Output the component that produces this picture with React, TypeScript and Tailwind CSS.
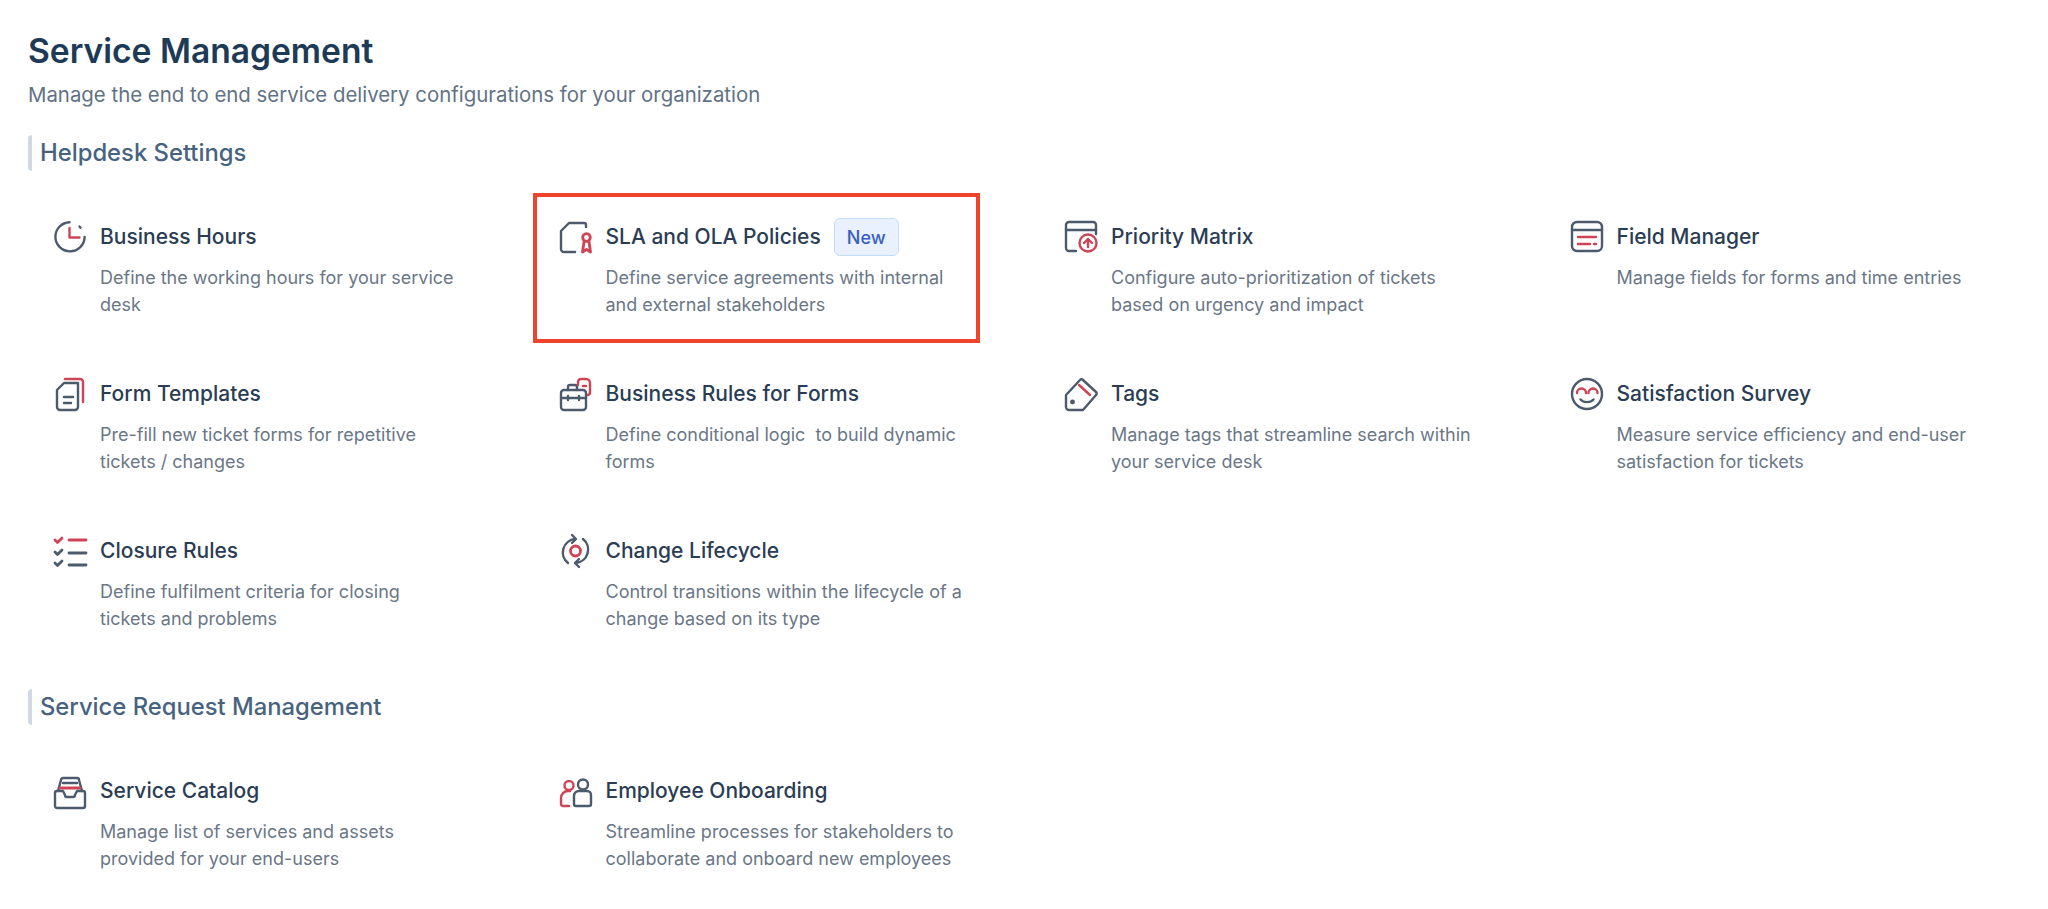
import type { ReactNode } from 'react';

const DARK = '#4b5a6c';
const RED = '#cf4454';

function Icon({ children }: { children: ReactNode }) {
  return (
    <svg
      viewBox="0 0 32 32"
      fill="none"
      strokeWidth={2.4}
      strokeLinecap="round"
      strokeLinejoin="round"
      className="w-8 h-8 shrink-0 overflow-visible"
    >
      {children}
    </svg>
  );
}

const ClockIcon = () => (
  <Icon>
    <path d="M15.5 1.2A14.6 14.6 0 1 0 30.6 16" stroke={DARK} />
    <path d="M25.5 5.5l1 1.2" stroke={DARK} />
    <path d="M15.5 7v9.5h10" stroke={RED} />
  </Icon>
);

const PolicyIcon = () => (
  <Icon>
    <path d="M15 31H4a3 3 0 0 1-3-3V10l8-8h15a2 2 0 0 1 2 2v2" stroke={DARK} />
    <circle cx="26.5" cy="16.500" r="3.800" stroke={RED} strokeWidth={2.800} />
    <path d="M24 21l-1.500 10 4-2.500 4 2.500-1.500-10" stroke={RED} strokeWidth={2.800} />
  </Icon>
);

const MatrixIcon = () => (
  <Icon>
    <path d="M11 30H4a3 3 0 0 1-3-3V4a3 3 0 0 1 3-3h24a3 3 0 0 1 3 3v9" stroke={DARK} />
    <path d="M1 9h30" stroke={DARK} />
    <circle cx="23" cy="22" r="8.500" stroke={RED} />
    <path d="M19 22l4-4 4 4M23 18v8" stroke={RED} />
  </Icon>
);

const FieldIcon = () => (
  <Icon>
    <rect x="1" y="1" width="30" height="29" rx="5" stroke={DARK} />
    <path d="M1 9h30" stroke={DARK} />
    <path d="M7 16h18M7 23h12M23 23h2" stroke={RED} />
  </Icon>
);

const FormIcon = () => (
  <Icon>
    <path d="M11 1h15a3 3 0 0 1 3 3v20" stroke={RED} />
    <path d="M10 5h14v24a3 3 0 0 1-3 3H6a3 3 0 0 1-3-3V12z" stroke={DARK} />
    <path d="M10 19h9M10 25h7" stroke={DARK} />
  </Icon>
);

const BriefcaseIcon = () => (
  <Icon>
    <rect x="1" y="12" width="25" height="20" rx="3" stroke={DARK} />
    <path d="M8 12V9a2 2 0 0 1 2-2h5a2 2 0 0 1 2 2v3" stroke={DARK} />
    <path d="M1 20h25M8 18v4M19 18v4" stroke={DARK} />
    <path d="M18 7V4a3 3 0 0 1 3-3h5a4 4 0 0 1 4 4v9a3 3 0 0 1-2 3" stroke={RED} />
    <path d="M23 8h3" stroke={RED} />
  </Icon>
);

const TagIcon = () => (
  <Icon>
    <path d="M1 17L15 2a2 2 0 0 1 3 0l13 12a2 2 0 0 1 0 3L18 32H4a3 3 0 0 1-3-3z" stroke={DARK} />
    <circle cx="7.500" cy="24" r="1.200" fill={DARK} stroke={DARK} />
    <path d="M14 7l11 10" stroke={RED} />
  </Icon>
);

const SmileIcon = () => (
  <Icon>
    <circle cx="16" cy="16" r="15" stroke={DARK} />
    <path d="M6 15a4.500 4.500 0 0 1 9 0M17.500 15a4.500 4.500 0 0 1 9 0" stroke={RED} />
    <path d="M9.500 21.500c3 3.500 10 3.500 13 0" stroke={DARK} />
  </Icon>
);

const ChecklistIcon = () => (
  <Icon>
    <path d="M1 5l2.500 2.500L8 3" stroke={RED} strokeWidth={2.800} />
    <path d="M1 17l2.500 2.500L8 15M1 28l2.500 2.500L8 26" stroke={DARK} strokeWidth={2.800} />
    <path d="M15 5h17" stroke={RED} strokeWidth={2.800} />
    <path d="M15 18h17M15 30h17" stroke={DARK} strokeWidth={2.800} />
  </Icon>
);

const LifecycleIcon = () => (
  <Icon>
    <circle cx="15.500" cy="16" r="5" stroke={RED} strokeWidth={2.800} />
    <path d="M8 28A13.500 13.500 0 0 1 15 4M12 0l4 4-4 4" stroke={DARK} />
    <path d="M23 4a13.500 13.500 0 0 1-7 24M19 24l-4 4 4 4" stroke={DARK} />
  </Icon>
);

const InboxIcon = () => (
  <Icon>
    <path d="M4 16L7 5a2 2 0 0 1 2-2h14a2 2 0 0 1 2 2l3 11" stroke={DARK} />
    <path d="M9 8h14" stroke={DARK} />
    <path d="M6 13h20" stroke={RED} strokeWidth={3} />
    <path d="M3 16h6l2 4a2 2 0 0 0 2 2h6a2 2 0 0 0 2-2l2-4h6a2 2 0 0 1 2 2v13a2 2 0 0 1-2 2H3a2 2 0 0 1-2-2V18a2 2 0 0 1 2-2z" stroke={DARK} />
  </Icon>
);

const PeopleIcon = () => (
  <Icon>
    <circle cx="9" cy="10.500" r="4.500" stroke={RED} />
    <path d="M9 31H3a2 2 0 0 1-2-2v-6a7 7 0 0 1 7-7h2" stroke={RED} />
    <circle cx="23" cy="9.500" r="5" stroke={DARK} />
    <path d="M14 21a5 5 0 0 1 5-5h8a4 4 0 0 1 4 4v9a2 2 0 0 1-2 2H16a2 2 0 0 1-2-2z" stroke={DARK} />
  </Icon>
);

type Item = { icon: ReactNode; title: string; desc: string; isNew?: boolean };

const helpdesk: Item[] = [
  { icon: <ClockIcon />, title: 'Business Hours', desc: 'Define the working hours for your service desk' },
  { icon: <PolicyIcon />, title: 'SLA and OLA Policies', desc: 'Define service agreements with internal and external stakeholders', isNew: true },
  { icon: <MatrixIcon />, title: 'Priority Matrix', desc: 'Configure auto-prioritization of tickets based on urgency and impact' },
  { icon: <FieldIcon />, title: 'Field Manager', desc: 'Manage fields for forms and time entries' },
  { icon: <FormIcon />, title: 'Form Templates', desc: 'Pre-fill new ticket forms for repetitive tickets / changes' },
  { icon: <BriefcaseIcon />, title: 'Business Rules for Forms', desc: 'Define conditional logic  to build dynamic forms' },
  { icon: <TagIcon />, title: 'Tags', desc: 'Manage tags that streamline search within your service desk' },
  { icon: <SmileIcon />, title: 'Satisfaction Survey', desc: 'Measure service efficiency and end-user satisfaction for tickets' },
  { icon: <ChecklistIcon />, title: 'Closure Rules', desc: 'Define fulfilment criteria for closing\ntickets and problems' },
  { icon: <LifecycleIcon />, title: 'Change Lifecycle', desc: 'Control transitions within the lifecycle of a change based on its type' },
];

const requests: Item[] = [
  { icon: <InboxIcon />, title: 'Service Catalog', desc: 'Manage list of services and assets\nprovided for your end-users' },
  { icon: <PeopleIcon />, title: 'Employee Onboarding', desc: 'Streamline processes for stakeholders to collaborate and onboard new employees' },
];

function Card({ item }: { item: Item }) {
  return (
    <div className="relative flex gap-[14px] pl-[26px] h-[157px] pt-[26px]">
      {item.isNew && <div className="absolute left-[-1px] top-[-2px] w-[447px] h-[150px] border-4 border-[#ef442b]" />}
      {item.icon}
      <div className="min-w-0">
        <div className="flex items-center gap-[13px] h-8">
          <span className="text-[21px] font-medium text-[#2a3d55]">{item.title}</span>
          {item.isNew && (
            <span className="h-[38px] w-[65px] flex items-center justify-center rounded-md border border-[#c5dcf8] bg-[#e8f1fd] text-[18px] font-medium text-[#3b5fc0]">
              New
            </span>
          )}
        </div>
        <p className="mt-[11px] w-[362px] text-[18px] leading-[27px] text-[#6a7787] whitespace-pre-wrap">{item.desc}</p>
      </div>
    </div>
  );
}

function Section({ title, items }: { title: string; items: Item[] }) {
  return (
    <section>
      <h2 className="border-l-4 border-[#cfd9e3] pl-2 h-9 flex items-center rounded-sm text-[23.8px] font-medium text-[#47637f]">
        {title}
      </h2>
      <div className="grid grid-cols-4 mt-6 w-[2022px]">
        {items.map((item) => (
          <Card key={item.title} item={item} />
        ))}
      </div>
    </section>
  );
}

export default function App() {
  return (
    <div className="bg-white pl-7 pt-[27px] min-h-[909px] overflow-hidden font-['Inter',sans-serif]">
      <h1 className="text-[33.6px] leading-[48px] font-semibold text-[#1d3a56]">Service Management</h1>
      <p className="mt-[6px] text-[20.4px] leading-7 text-[#5f7286]">Manage the end to end service delivery configurations for your organization</p>
      <div className="mt-[26px] flex flex-col gap-[23px]">
        <Section title="Helpdesk Settings" items={helpdesk} />
        <Section title="Service Request Management" items={requests} />
      </div>
    </div>
  );
}
